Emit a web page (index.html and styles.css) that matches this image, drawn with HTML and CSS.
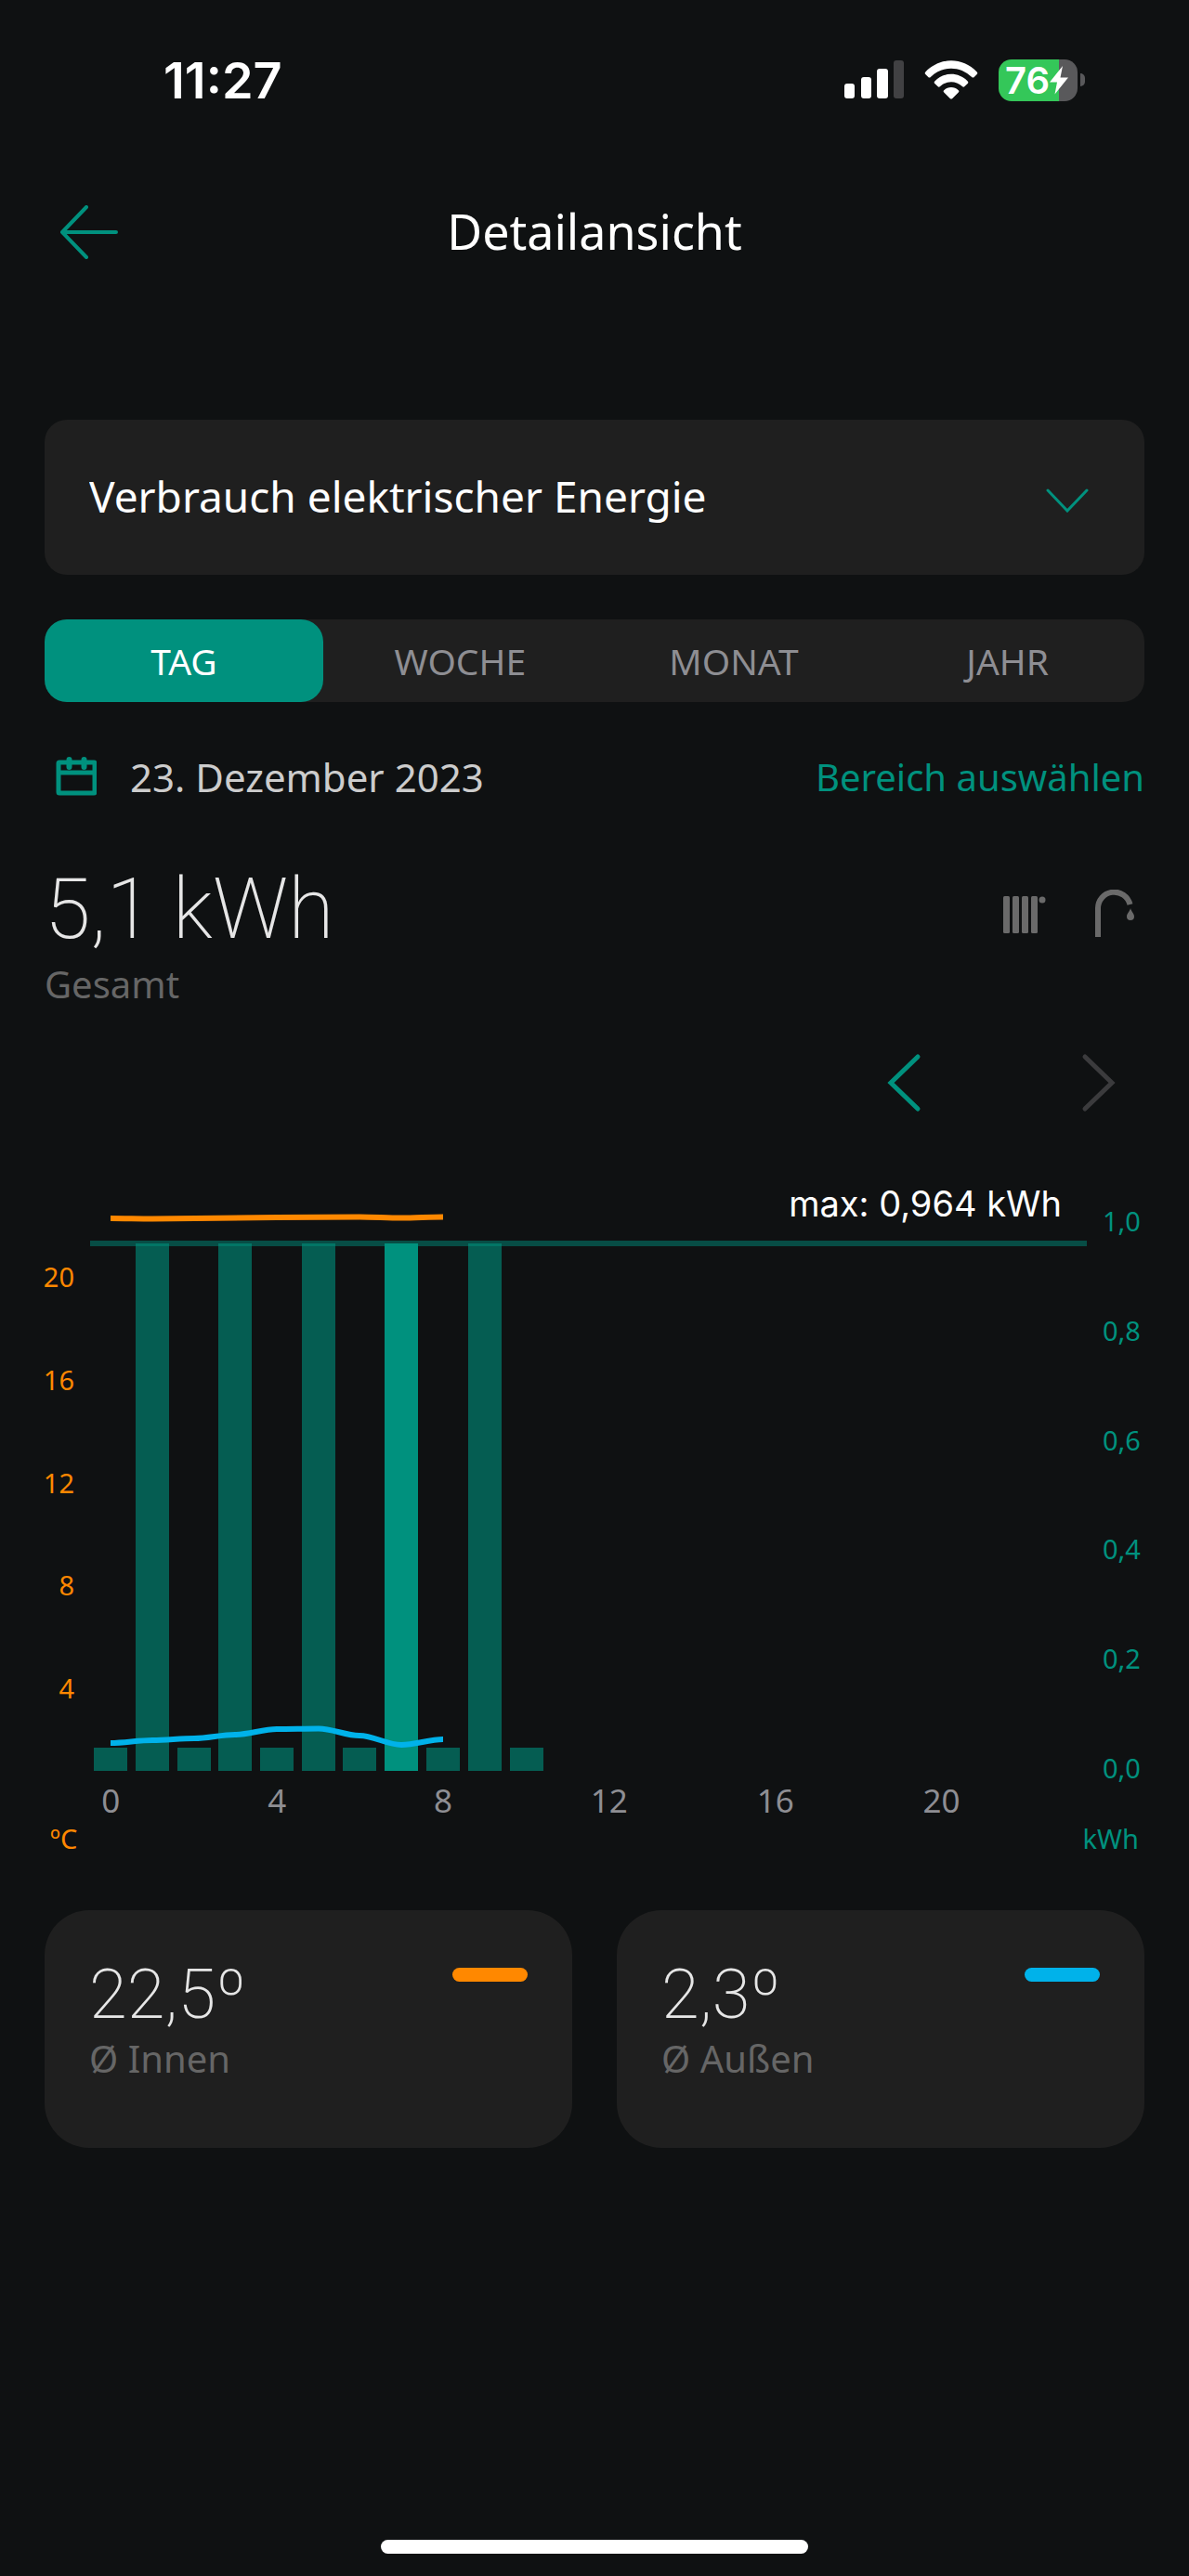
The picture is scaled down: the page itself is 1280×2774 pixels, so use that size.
FILE: index.html
```html
<!DOCTYPE html>
<html lang="de">
<head>
    <meta charset="UTF-8">
    <meta name="viewport" content="width=device-width, initial-scale=1.0">
    <title>Detailansicht</title>
    <link rel="stylesheet" href="styles.css">
</head>
<body>

<div class="status-bar">
    <span class="time">11:27</span>
    <div class="status-icons">
        <svg width="64" height="42" viewBox="0 0 64 42" fill="#fff">
            <rect x="0" y="25" width="11" height="16" rx="3"/>
            <rect x="18" y="18" width="11" height="23" rx="3"/>
            <rect x="35" y="9" width="12" height="32" rx="3"/>
            <rect x="53" y="0" width="11" height="41" rx="3" fill="#414143"/>
        </svg>
        <svg width="58" height="42" viewBox="0 0 58 42" fill="#fff">
            <path d="M1.3 12.4C17 -3.8 41 -3.8 56.7 12.4c.8.9.8 1.8 0 2.6l-3 3c-.8.8-1.7.8-2.5 0C38.5 5.5 19.5 5.5 6.8 18c-.8.8-1.7.8-2.5 0l-3-3c-.8-.8-.8-1.7 0-2.6z"/>
            <path d="M11.3 22.4c10-10.1 25.4-10.1 35.4 0 .8.8.8 1.7 0 2.5l-3.2 3.2c-.8.8-1.7.8-2.6 0-6.8-6.5-17-6.5-23.8 0-.9.8-1.8.8-2.6 0l-3.2-3.2c-.8-.8-.8-1.7 0-2.5z"/>
            <path d="M21.2 32.2c4.4-4.4 11.2-4.4 15.6 0 .8.8.8 1.5 0 2.3l-6.5 6.4c-.9.9-1.7.9-2.6 0l-6.5-6.4c-.8-.8-.8-1.5 0-2.3z"/>
        </svg>
        <div class="battery">
            <div class="battery-body">
                <span class="battery-level">76</span>
                <svg width="20" height="31" viewBox="0 0 20 31" fill="#fff"><path d="M14 0L0 17.5h8L5.5 30.5 20 12.5h-8.5z"/></svg>
            </div>
            <div class="battery-cap"></div>
        </div>
    </div>
</div>

<header class="header">
    <button class="icon-button" aria-label="Zurück">
        <svg width="64" height="58" viewBox="0 0 64 58" fill="none" stroke="#00917e" stroke-width="4" stroke-linecap="round" stroke-linejoin="round"><path d="M29 2L3 29l26 27M3 29h58"/></svg>
    </button>
    <h1>Detailansicht</h1>
</header>

<main class="content">
    <div class="select-box">
        <select aria-label="Messwert">
            <option>Verbrauch elektrischer Energie</option>
        </select>
        <svg class="select-arrow" width="46" height="28" viewBox="0 0 46 28" fill="none" stroke="#00917e" stroke-width="3" stroke-linecap="round"><path d="M2 4l21 22L44 4"/></svg>
    </div>

    <div class="tabs">
        <button class="tab active">TAG</button>
        <button class="tab">WOCHE</button>
        <button class="tab">MONAT</button>
        <button class="tab">JAHR</button>
    </div>

    <div class="date-row">
        <div class="date">
            <svg width="44" height="42" viewBox="0 0 44 42" fill="none" stroke="#00917e" stroke-width="5"><rect x="3" y="6" width="39" height="33" rx="1"/><path d="M3 17h39"/><path d="M14.5 3v8M30.5 3v8" stroke-width="6" stroke-linecap="round"/></svg>
            <span>23. Dezember 2023</span>
        </div>
        <a class="range-link" href="#">Bereich auswählen</a>
    </div>

    <div class="total-row">
        <div>
            <div class="total">5,1 kWh</div>
            <div class="caption">Gesamt</div>
        </div>
        <div class="source-icons">
            <svg width="46" height="52" viewBox="0 0 46 52" fill="#6a6a6a">
                <rect x="0" y="7" width="7" height="40" rx="1.5"/>
                <rect x="10" y="7" width="7" height="40" rx="1.5"/>
                <rect x="20" y="7" width="7" height="40" rx="1.5"/>
                <rect x="30" y="7" width="7" height="40" rx="1.5"/>
                <circle cx="42" cy="11" r="3.5"/>
            </svg>
            <svg width="44" height="52" viewBox="0 0 44 52" fill="none">
                <path d="M4 51V20.5A17.5 17.5 0 0 1 38.5 16" stroke="#6a6a6a" stroke-width="6"/>
                <path d="M39 20c1 4 4 5.5 4 9a4 4 0 0 1-8 0c0-3.5 3-5 4-9z" fill="#6a6a6a"/>
            </svg>
        </div>
    </div>

    <div class="pager">
        <button class="icon-button" aria-label="Vorheriger Tag">
            <svg width="38" height="64" viewBox="0 0 38 64" fill="none" stroke="#00917e" stroke-width="5" stroke-linecap="round"><path d="M34 4L5 32l29 28"/></svg>
        </button>
        <button class="icon-button" aria-label="Nächster Tag" disabled>
            <svg width="38" height="64" viewBox="0 0 38 64" fill="none" stroke="#3b3b3d" stroke-width="5" stroke-linecap="round"><path d="M4 4l29 28L4 60"/></svg>
        </button>
    </div>
</main>

<section class="chart">
    <div class="axis axis-left">
        <span>20</span><span>16</span><span>12</span><span>8</span><span>4</span>
    </div>
    <svg class="plot" viewBox="0 0 1073 651">
        <g class="bars">
            <rect x="4" y="612" width="36" height="25"/>
            <rect x="49" y="69" width="36" height="568"/>
            <rect x="94" y="612" width="36" height="25"/>
            <rect x="138" y="69" width="36" height="568"/>
            <rect x="183" y="612" width="36" height="25"/>
            <rect x="228" y="69" width="36" height="568"/>
            <rect x="272" y="612" width="36" height="25"/>
            <rect x="362" y="612" width="36" height="25"/>
            <rect x="407" y="69" width="36" height="568"/>
            <rect x="452" y="612" width="36" height="25"/>
        </g>
        <rect class="max-line" x="0" y="66" width="1073" height="6"/>
        <rect class="bar-selected" x="317" y="69" width="36" height="568"/>
        <path class="line-inside" d="M22 42C37 42 52 42.5 67 42.5C97 42 127 41.5 201 41C250 40.5 270 40.5 290 40.5C305 40.5 320 41.5 335 41.5C350 41.5 365 40.5 380 40.5"/>
        <path class="line-outside" d="M22 607C37 607 52 604 67 604C82 604 97 602 112 602C127 602 141 598 156 598C171 598 186 592 201 592C216 592 231 591.5 246 591.5C261 591.5 275 599 290 599C305 599 320 609 335 609C350 609 365 603 380 603"/>
        <text class="max-label" x="1046" y="40" text-anchor="end">max: 0,964 kWh</text>
    </svg>
    <div class="axis axis-right">
        <span>1,0</span><span>0,8</span><span>0,6</span><span>0,4</span><span>0,2</span><span>0,0</span>
    </div>
    <div class="axis-bottom">
        <span>0</span><span>4</span><span>8</span><span>12</span><span>16</span><span>20</span>
    </div>
    <div class="units">
        <span class="unit-temp">ºC</span>
        <span class="unit-energy">kWh</span>
    </div>
</section>

<section class="cards">
    <div class="card">
        <div>
            <div class="card-value">22,5º</div>
            <div class="caption">Ø Innen</div>
        </div>
        <div class="legend inside"></div>
    </div>
    <div class="card">
        <div>
            <div class="card-value">2,3º</div>
            <div class="caption">Ø Außen</div>
        </div>
        <div class="legend outside"></div>
    </div>
</section>

<div class="home-indicator"></div>

</body>
</html>
```
FILE: styles.css
```css
* {
    box-sizing: border-box;
}
body {
    font-family: 'Noto Sans', 'Open Sans', sans-serif;
    margin: 0;
    background: #0f1112;
    color: #fff;
    min-height: 100vh;
    display: flex;
    flex-direction: column;
}
svg {
    display: block;
}
button {
    font-family: inherit;
    border: none;
    background: none;
    padding: 0;
    cursor: pointer;
}
.status-bar {
    display: flex;
    justify-content: space-between;
    align-items: center;
    height: 172px;
    padding: 0 112px 0 176px;
}
.time {
    font-family: Inter, sans-serif;
    font-size: 54px;
    font-weight: 600;
}
.status-icons {
    display: flex;
    align-items: center;
    gap: 22px;
}
.battery {
    display: flex;
    align-items: center;
    gap: 3px;
}
.battery-body {
    display: flex;
    align-items: center;
    width: 85px;
    height: 45px;
    padding-left: 7px;
    border-radius: 14px;
    background: linear-gradient(to right, #34c759 76%, #59595b 76%);
}
.battery-level {
    font-family: Inter, sans-serif;
    font-size: 40px;
    font-weight: 600;
    line-height: 45px;
}
.battery-cap {
    width: 5px;
    height: 14px;
    border-radius: 0 5px 5px 0;
    background: #59595b;
}
.header {
    display: grid;
    grid-template-columns: 1fr auto 1fr;
    align-items: center;
    height: 156px;
    padding: 0 64px;
}
.header h1 {
    margin: 0;
    padding-bottom: 4px;
    font-size: 52px;
    font-weight: 400;
}
.icon-button {
    justify-self: start;
}
.content {
    padding: 124px 48px 0;
}
.select-box {
    display: grid;
    align-items: center;
    height: 167px;
    border-radius: 24px;
    background: #1f1f1f;
}
.select-box select {
    grid-area: 1 / 1;
    width: 100%;
    height: 100%;
    padding: 0 120px 4px 48px;
    border: none;
    border-radius: 24px;
    background: none;
    color: #fff;
    font-family: inherit;
    font-size: 46px;
    appearance: none;
}
.select-arrow {
    grid-area: 1 / 1;
    justify-self: end;
    margin: 4px 60px 0 0;
    pointer-events: none;
}
.tabs {
    display: grid;
    grid-template-columns: 300px repeat(3, 1fr);
    margin-top: 48px;
    height: 89px;
    border-radius: 24px;
    background: #1f1f1f;
}
.tab {
    border-radius: 24px;
    color: #8e8e93;
    font-size: 39px;
}
.tab.active {
    background: #00917e;
    color: #fff;
}
.date-row {
    display: flex;
    justify-content: space-between;
    align-items: center;
    margin-top: 50px;
    height: 60px;
    font-size: 40px;
}
.date {
    display: flex;
    align-items: center;
    gap: 36px;
    padding-left: 12px;
    color: #ccc;
    font-size: 42px;
}
.range-link {
    color: #00917e;
    text-decoration: none;
}
.total-row {
    display: flex;
    justify-content: space-between;
    margin-top: 60px;
}
.total {
    font-family: Roboto, sans-serif;
    font-size: 90px;
    font-weight: 200;
    line-height: 108px;
    color: #e6e6e6;
}
.caption {
    font-size: 40px;
    line-height: 52px;
    color: #666;
}
.source-icons {
    display: flex;
    gap: 52px;
    padding: 32px 10px 0 0;
}
.pager {
    display: flex;
    justify-content: flex-end;
    gap: 172px;
    margin-top: 48px;
    padding-right: 30px;
}
.chart {
    display: grid;
    grid-template-columns: 80px 1fr 93px;
    column-gap: 17px;
    margin-top: 72px;
}
.axis {
    display: flex;
    flex-direction: column;
    justify-content: space-between;
    font-size: 29px;
    line-height: 34px;
}
.axis-left {
    padding: 88px 0 86px;
    text-align: right;
    color: #ff8800;
}
.axis-right {
    padding-top: 28px;
    color: #00917e;
}
.plot {
    width: 100%;
    height: auto;
}
.bars {
    fill: #055d52;
}
.bar-selected {
    fill: #00917e;
}
.max-line {
    fill: #00917e;
    fill-opacity: 0.48;
}
.line-inside,
.line-outside {
    fill: none;
    stroke-width: 6;
}
.line-inside {
    stroke: #ff8800;
}
.line-outside {
    stroke: #00b2ea;
}
.max-label {
    fill: #fff;
    font-family: Inter, sans-serif;
    font-size: 38px;
}
.axis-bottom {
    grid-column: 2;
    display: grid;
    grid-template-columns: repeat(6, 1fr);
    font-size: 35px;
    line-height: 36px;
    color: #8e8e93;
}
.axis-bottom span {
    width: 25%;
    display: flex;
    justify-content: center;
}
.units {
    grid-column: 1 / -1;
    display: flex;
    justify-content: space-between;
    margin-top: 6px;
    padding: 0 54px;
    font-size: 29px;
    line-height: 34px;
}
.unit-temp {
    color: #ff8800;
}
.unit-energy {
    color: #00917e;
}
.cards {
    display: grid;
    grid-template-columns: 1fr 1fr;
    gap: 48px;
    margin-top: 60px;
    padding: 0 48px;
}
.card {
    display: flex;
    justify-content: space-between;
    min-height: 256px;
    padding: 48px 48px 36px;
    border-radius: 48px;
    background: #1f1f1f;
}
.card-value {
    font-family: Roboto, sans-serif;
    font-size: 74px;
    font-weight: 200;
    line-height: 86px;
    color: #e6e6e6;
}
.legend {
    width: 81px;
    height: 15px;
    margin-top: 14px;
    border-radius: 8px;
}
.inside {
    background: #ff8800;
}
.outside {
    background: #00b2ea;
}
.home-indicator {
    width: 36%;
    height: 15px;
    margin: auto auto 24px;
    border-radius: 8px;
    background: #fff;
}
```
